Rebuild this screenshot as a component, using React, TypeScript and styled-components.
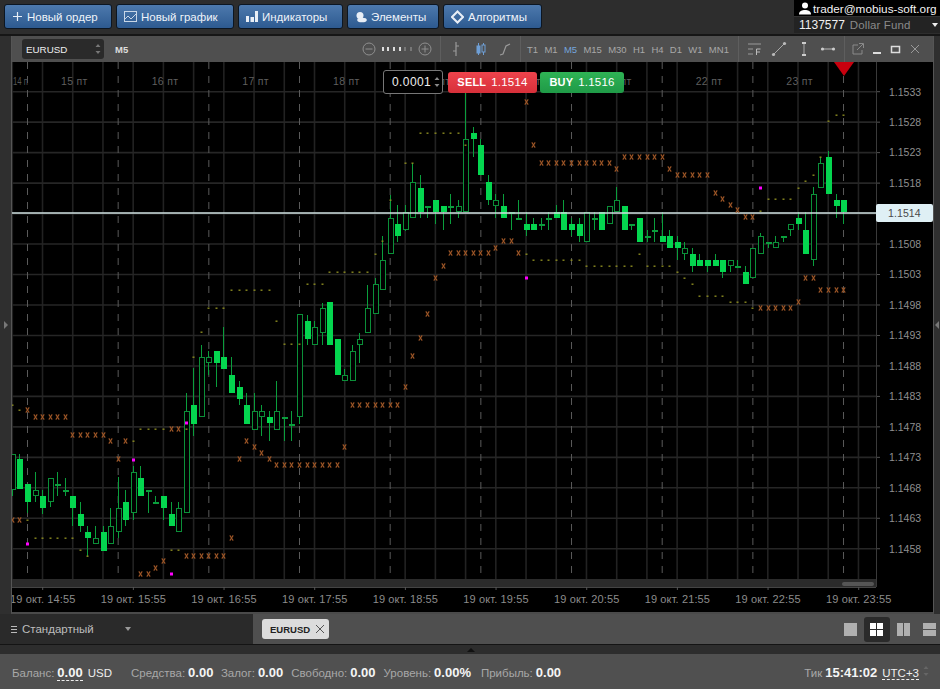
import React from "react";
import styled, { createGlobalStyle } from "styled-components";

const Global = createGlobalStyle`
  html, body { margin: 0; padding: 0; background: #2b2b2b; }
  body { font-family: "Liberation Sans", Arial, sans-serif; }
  * { box-sizing: border-box; }
  svg { flex: none; }
`;

/* ---------- page frame ---------- */
const Page = styled.div`
  width: 940px; height: 689px; overflow: hidden;
  display: flex; flex-direction: column; background: #2b2b2b;
`;
const TopBar = styled.header`
  height: 36px; flex: none; display: flex; align-items: flex-start;
  background: #2d2d2d; border-bottom: 2px solid #161616;
  padding: 4px 0 0 4px;
`;
const Buttons = styled.div`display: flex; gap: 4px; flex: 1;`;
const NavButton = styled.button<{ $w: number }>`
  width: ${p => p.$w}px; height: 25px; padding: 0 0 0 7px; margin: 0;
  display: flex; align-items: center; gap: 4px;
  border: 1px solid #0c1622; border-radius: 3px;
  background: linear-gradient(#4d79ad, #2d5a90);
  color: #eef3f9; font: 11.5px "Liberation Sans", sans-serif;
`;
const Account = styled.div`
  width: 146px; margin-top: -4px; height: 33px; background: #000; display: flex; flex-direction: column;
`;
const AccountTop = styled.div`
  height: 16px; display: flex; align-items: center; gap: 2px; padding-left: 5px;
  color: #f2f2f2; font-size: 11.75px; white-space: nowrap;
`;
const AccountBottom = styled.div`
  height: 17px; display: flex; align-items: center; gap: 5px; padding: 0 0 0 5px;
  background: #232323; border-top: 1px solid #333; color: #f0f0f0; font-size: 12px;
`;
const FundName = styled.span`color: #8a8a8a; font-size: 11.5px; letter-spacing: .1px; flex: 1;`;
const Main = styled.div`flex: 1; display: flex; min-height: 0;`;
const Rail = styled.div<{ $w: number }>`
  width: ${p => p.$w}px; flex: none; background: #2f2f2f; display: flex; align-items: center; justify-content: center;
`;
const RailArrow = styled.i<{ $right?: boolean }>`
  width: 0; height: 0; border-style: solid; border-width: 4px 0 4px 4px;
  border-color: transparent transparent transparent #777;
  transform: ${p => (p.$right ? "rotate(180deg)" : "none")};
`;
const Window = styled.section`
  flex: 1; display: flex; flex-direction: column; border-left: 1px solid #555; border-right: 1px solid #555; border-bottom: 2px solid #4a4a4a;
`;

/* ---------- chart toolbar ---------- */
const Toolbar = styled.div`
  height: 26px; flex: none; display: flex; background: #4f4f4f; color: #a8a8a8; font-size: 9.5px;
`;
const Section = styled.div<{ $w?: number; $pad: number; $gap: number }>`
  ${p => (p.$w ? `width:${p.$w}px; flex:none;` : "flex:1;")}
  display: flex; align-items: center; gap: ${p => p.$gap}px; padding-left: ${p => p.$pad}px;
  border-left: 1px solid #5e5e5e;
`;
const SymbolSection = styled.div`flex: 1; display: flex; align-items: center; padding-left: 10px; gap: 11px;`;
const SymbolBox = styled.div`
  width: 82px; height: 20px; background: #2a2a2a; border-radius: 3px; display: flex; align-items: center; justify-content: space-between;
  padding: 0 3px 0 4px; color: #eee; font-size: 9.8px;
`;
const Period = styled.span`color: #ddd; font-size: 9.5px; font-weight: bold; flex: 1;`;
const Tf = styled.span<{ $active?: boolean }>`
  color: ${p => (p.$active ? "#74a5dc" : "#a8a8a8")};
`;
const ZoomBox = styled.div`display: flex; align-items: center; gap: 6px; margin-right: 8px;`;
const ZoomDots = styled.div`display: flex; gap: 3.7px; align-items: center;`;
const ZoomDot = styled.i<{ $on: boolean }>`
  width: 2px; height: 4px; background: ${p => (p.$on ? "#ddd" : "#777")};
`;

/* ---------- chart ---------- */
const Canvas = styled.div`flex: 1; position: relative; background: #000; min-height: 0;`;
const ChartSvg = styled.svg`display: block; width: 921px; height: 550px;`;
const OrderBar = styled.div`
  position: absolute; left: 371px; top: 8px; display: flex; align-items: center; gap: 5px;
`;
const StepBox = styled.div`
  width: 60px; height: 24px; background: #000; border: 1px solid #777; border-radius: 3px;
  display: flex; align-items: center; justify-content: space-between; padding: 0 2px 0 8px;
  color: #eee; font-size: 12px; letter-spacing: .4px;
`;
const Trade = styled.button<{ $buy?: boolean; $w: number }>`
  width: ${p => p.$w}px; height: 21px; margin: 0 ${p => (p.$buy ? 0 : -2)}px 0 0; padding: 0; border: 0; border-radius: 3px;
  display: flex; align-items: center; justify-content: center; gap: 5px;
  background: ${p => (p.$buy ? "linear-gradient(#2fb355,#1f9a47)" : "linear-gradient(#ee434c,#d7303a)")};
  color: #fff; font: 11.5px "Liberation Sans", sans-serif; letter-spacing: .2px;
  b { font-size: 11px; }
`;
const PriceFlag = styled.div`
  position: absolute; left: 864px; top: 142px; width: 57px; height: 18px; border-radius: 2px;
  background: #dff0f5; color: #4a4a4a; font-size: 10.5px; line-height: 18px; padding-left: 12px; letter-spacing: .1px;
`;

/* ---------- tabs ---------- */
const TabBar = styled.div`height: 30px; flex: none; display: flex; background: #4f4f4f;`;
const LayoutPick = styled.div`
  width: 253px; background: #2a2a2a; display: flex; align-items: center; gap: 5px; padding-left: 11px; color: #bdbdbd; font-size: 11.5px;
`;
const Burger = styled.span`width: 6px; height: 7px; border-top: 1px solid #bbb; border-bottom: 1px solid #bbb; position: relative;
  &::after { content: ""; position: absolute; left: 0; right: 0; top: 2px; height: 1px; background: #bbb; }`;
const PickName = styled.span`width: 98px;`;
const Caret = styled.i`width: 0; height: 0; border-style: solid; border-width: 4px 3.5px 0 3.5px; border-color: #999 transparent transparent transparent;`;
const TabsArea = styled.div`flex: 1; display: flex; align-items: center; padding: 0 0 0 9px;`;
const Tab = styled.div`
  width: 67px; height: 20px; background: #dcdcdc; border-radius: 3px; display: flex; align-items: center; justify-content: space-between;
  padding: 0 3px 0 8px; color: #222; font-size: 9.5px; font-weight: bold;
`;
const Views = styled.div`margin-left: auto; margin-right: -3px; display: flex; align-items: center; height: 100%;`;
const ViewBtn = styled.div<{ $on?: boolean }>`
  width: 26.5px; height: 25px; display: flex; align-items: center; justify-content: center;
  background: ${p => (p.$on ? "#2a2a2a" : "transparent")}; border-radius: 3px;
`;
const Splitter = styled.div`
  height: 10px; flex: none; background: #2d2d2d; border-top: 1px solid #141414; display: flex; padding-left: 467px; align-items: center;
`;
const Up = styled.i`width: 0; height: 0; border-style: solid; border-width: 0 4px 4px 4px; border-color: transparent transparent #111 transparent;`;

/* ---------- status ---------- */
const Status = styled.footer`
  height: 35px; flex: none; background: #505050; display: flex; align-items: center; padding: 1px 0 0 12px; color: #a8a8a8; font-size: 11.5px;
`;
const Stat = styled.span<{ $ml?: number }>`margin-left: ${p => p.$ml ?? 0}px; white-space: nowrap;`;
const Val = styled.b<{ $dash?: boolean }>`
  color: #f5f5f5; font-size: 13px; margin-left: 3px;
  ${p => (p.$dash ? "border-bottom: 1px dashed #eee;" : "")}
`;
const Plain = styled.span<{ $dash?: boolean }>`
  color: #eee; margin-left: 5px; ${p => (p.$dash ? "border-bottom: 1px dashed #eee;" : "")}
`;
const RightStat = styled(Stat)`margin-left: auto;`;

/* ---------- icons ---------- */
const W = "#e8eef6";
const Plus = () => <svg width="11" height="11"><path d="M5.5 1v9M1 5.5h9" stroke={W} strokeWidth="1.2" /></svg>;
const GraphIco = () => (
  <svg width="13" height="13"><rect x=".5" y="1.5" width="12" height="10" fill="none" stroke="#c8d6e6" /><path d="M1 9l3-3 3 3 5-5" fill="none" stroke="#c8d6e6" /></svg>
);
const BarsIco = () => (
  <svg width="12" height="11"><path d="M0 5h3v6H0zM4.5 6H8v5H4.5zM9 0h3v11H9z" fill={W} /></svg>
);
const ElemIco = () => (
  <svg width="12" height="12"><circle cx="5" cy="4.5" r="3.5" fill={W} /><ellipse cx="7" cy="9" rx="4.8" ry="2.3" fill={W} /></svg>
);
const DiamondIco = () => (
  <svg width="13" height="14"><path d="M6.5 1.5L12 7 6.5 12.5 1 7z" fill="none" stroke={W} strokeWidth="2" /></svg>
);
const UserIco = () => (
  <svg width="12" height="13"><circle cx="6" cy="3.5" r="3" fill="#fff" /><path d="M0 12.5c0-3.5 3-4.5 6-4.5s6 1 6 4.5z" fill="#fff" /></svg>
);
const Spin = ({ c = "#888" }: { c?: string }) => (
  <svg width="6" height="12"><path d="M3 1l2.5 3h-5zM3 11L.5 8h5z" fill={c} /></svg>
);
const CircleIco = ({ plus }: { plus?: boolean }) => (
  <svg width="14" height="14"><circle cx="7" cy="7" r="6" fill="none" stroke="#8f8f8f" /><path d={plus ? "M3.5 7h7M7 3.5v7" : "M3.5 7h7"} stroke="#8f8f8f" /></svg>
);
const BarIco = () => (
  <svg width="14" height="16"><path d="M7 1v14M4 10h3M7 5h3" stroke="#9a9a9a" strokeWidth="1.2" fill="none" /></svg>
);
const CandleIco = () => (
  <svg width="14" height="16"><path d="M4.5 2v12M9.5 2v12" stroke="#6f9fd6" /><rect x="3" y="5" width="3" height="7" fill="#6f9fd6" stroke="#6f9fd6" /><rect x="8" y="4" width="3" height="7" fill="#4f4f4f" stroke="#6f9fd6" /></svg>
);
const LineIco = () => (
  <svg width="14" height="16"><path d="M2 14l3-1 3-8 4-2" stroke="#9a9a9a" strokeWidth="1.2" fill="none" /></svg>
);
const FibIco = () => (
  <svg width="16" height="16">
    <path d="M1 3h13M1 8h5M1 13h5" stroke="#9a9a9a" /><path d="M9.5 14V8h4M9.5 11H13" stroke="#bbb" fill="none" />
  </svg>
);
const SlashIco = () => (
  <svg width="16" height="16"><path d="M3 13L13 3" stroke="#a8a8a8" /><circle cx="2.5" cy="13.5" r="1.6" fill="#bbb" /><circle cx="13.5" cy="2.5" r="1.6" fill="#bbb" /></svg>
);
const VertIco = () => (
  <svg width="16" height="16"><path d="M8 2v12" stroke="#a8a8a8" /><path d="M6 2h4M6 14h4" stroke="#ccc" strokeWidth="2" /></svg>
);
const HorIco = () => (
  <svg width="16" height="16"><path d="M2 8h12" stroke="#a8a8a8" strokeWidth="1.2" /><circle cx="2.5" cy="8" r="1.6" fill="#ccc" /><circle cx="13.5" cy="8" r="1.6" fill="#ccc" /></svg>
);
const PopIco = () => (
  <svg width="12" height="14"><path d="M6 3H1v9h9V8" fill="none" stroke="#8a8a8a" /><path d="M5 8l6-6M7 1.5h4.5V6" fill="none" stroke="#8a8a8a" /></svg>
);
const MinIco = () => <svg width="12" height="14"><path d="M2 11h8" stroke="#ddd" strokeWidth="2" /></svg>;
const MaxIco = () => <svg width="12" height="14"><rect x="1.5" y="4.5" width="8" height="6" fill="none" stroke="#ddd" strokeWidth="1.5" /></svg>;
const CloseIco = ({ c = "#999", s = 12 }: { c?: string; s?: number }) => (
  <svg width={s} height={s + 2}><path d={`M2 3L${s - 2} ${s - 1}M${s - 2} 3L2 ${s - 1}`} stroke={c} /></svg>
);
const ViewIco = ({ kind, on }: { kind: number; on?: boolean }) => {
  const c = on ? "#fff" : "#b0b0b0";
  const r: number[][] =
    kind === 0 ? [[0, 0, 13, 13]] :
    kind === 1 ? [[0, 0, 6, 6], [7, 0, 6, 6], [0, 7, 6, 6], [7, 7, 6, 6]] :
    kind === 2 ? [[0, 0, 6, 13], [7, 0, 6, 13]] :
    [[0, 0, 13, 6], [0, 7, 13, 6]];
  return <svg width="13" height="13">{r.map((a, i) => <rect key={i} x={a[0]} y={a[1]} width={a[2]} height={a[3]} fill={c} />)}</svg>;
};

/* ---------- chart data: [top, bottom, high, low, kind]  kind 0 filled, 1 hollow, 2 doji ---------- */
const C: number[][] = [
  [454,490,454,496,1],[459,489,454,489,0],[484,502,484,513,0],[490,496,472,502,1],[496,508,490,514,0],
  [478,502,478,507,1],[484,485,472,496,2],[490,491,478,496,2],[496,508,496,526,0],[514,526,502,532,0],
  [532,538,526,557,0],[538,544,526,544,1],[532,551,526,551,0],[526,544,508,544,1],[508,532,477,538,1],
  [502,520,490,526,0],[472,513,466,520,1],[478,496,466,496,0],[490,491,490,513,2],[502,503,496,503,2],
  [496,508,496,520,0],[514,526,502,526,0],[508,532,502,532,1],[411,513,393,513,1],[405,424,368,436,0],
  [357,417,345,417,1],[357,363,351,375,1],[351,363,351,387,0],[357,369,327,369,0],[375,393,357,393,0],
  [387,399,381,405,0],[405,424,393,424,0],[411,430,393,430,1],[411,417,405,436,1],[417,423,411,441,0],
  [411,430,381,430,1],[417,418,417,441,2],[424,425,411,441,2],[314,417,314,424,1],[321,339,315,345,0],
  [327,345,321,345,1],[308,333,303,345,1],[302,345,302,345,0],[339,375,339,375,0],[375,381,369,381,1],
  [351,381,345,381,1],[339,345,333,363,1],[308,333,285,333,1],[284,314,278,314,1],[260,290,236,290,1],
  [218,254,195,254,1],[224,236,205,242,0],[212,230,205,231,1],[182,218,163,218,1],[188,212,175,218,0],
  [206,207,206,218,2],[200,212,200,224,0],[206,212,206,230,0],[206,207,194,224,2],[206,212,200,218,1],
  [139,212,92,212,1],[133,139,127,157,0],[145,175,139,175,0],[182,200,175,205,0],[200,206,194,218,1],
  [206,218,194,218,0],[212,213,212,230,2],[218,219,200,219,2],[224,230,212,236,0],[224,230,218,230,0],
  [224,225,218,230,2],[218,219,212,230,2],[212,218,205,218,0],[212,230,200,230,0],[224,230,218,236,0],
  [224,236,218,242,0],[212,242,212,242,1],[218,219,212,230,2],[212,230,212,230,0],[206,224,206,224,1],
  [200,212,187,212,1],[206,230,206,230,0],[224,225,224,230,2],[218,242,218,242,0],[236,237,230,242,2],
  [230,231,218,242,2],[236,242,212,242,0],[236,248,230,248,0],[242,248,236,260,0],[248,254,242,260,1],
  [254,266,248,272,0],[260,266,254,266,0],[260,266,260,272,0],[260,266,254,266,0],[260,272,260,278,0],
  [260,266,260,272,1],[266,267,260,267,2],[272,284,266,284,0],[248,278,248,278,1],[236,254,233,254,1],
  [242,243,242,248,2],[242,248,236,248,1],[236,237,236,242,2],[224,230,224,236,1],[218,224,212,230,0],
  [230,254,212,254,0],[194,260,187,266,1],[163,188,157,188,1],[157,194,151,194,0],[200,206,194,218,0],
  [200,212,200,224,0],
];
/* runs: [fromIndex, toIndex, y] */
const MARKS: number[][] = [
  [0,1,520],[2,2,410],[3,7,417],[8,12,435],[13,13,441],[14,14,459],[15,15,441],[17,18,574],[19,19,568],[20,20,561],
  [21,22,429],[23,28,556],[29,29,538],[30,30,459],[31,31,441],[32,32,447],[33,33,453],[34,34,459],[35,43,465],[44,44,447],
  [45,51,405],[52,52,387],[53,53,356],[54,54,338],[55,55,314],[56,56,278],[57,57,266],[58,63,253],[64,64,248],[65,66,241],
  [67,67,253],[68,68,102],[69,69,145],[70,79,163],[80,80,169],[81,86,157],[87,87,169],[88,92,175],[93,93,193],[94,94,199],
  [95,95,205],[96,96,210],[97,98,217],[99,103,308],[104,104,302],[105,106,278],[107,110,290],
];
const DOTS: number[][] = [
  [0,0,405],[1,1,410],[2,2,520],[3,8,538],[9,9,550],[10,10,556],[16,16,441],[17,20,429],[21,22,550],[23,23,429],
  [24,24,357],[25,25,332],[26,28,308],[29,34,290],[35,35,321],[36,38,344],[39,41,284],[42,47,272],[48,48,254],[49,49,241],
  [50,50,200],[52,53,163],[54,59,133],[60,60,145],[68,68,254],[69,75,260],[76,82,266],[83,83,254],[84,87,266],[88,88,272],
  [89,89,278],[90,90,284],[91,94,296],[95,97,302],[98,98,308],[99,99,211],[100,103,199],[104,104,188],[105,105,181],[106,106,175],
  [107,107,157],[108,108,121],[109,110,115],
];
const MAGENTA: number[][] = [[2,544],[16,460],[23,423],[21,574],[68,278],[99,188]];
const cx = (i: number) => Math.floor(12.4 + 7.556 * i) + 0.5;
const expand = (runs: number[][]) => runs.flatMap(([a, b, y]) => Array.from({ length: b - a + 1 }, (_, k) => [a + k, y]));

const PRICES = ["1.1533","1.1528","1.1523","1.1518","","1.1508","1.1503","1.1498","1.1493","1.1488","1.1483","1.1478","1.1473","1.1468","1.1463","1.1458"];
const TIMES = ["14:55","15:55","16:55","17:55","18:55","19:55","20:55","21:55","22:55","23:55"];
const AX = { fill: "#8f8f8f", fontFamily: "Liberation Sans, sans-serif", fontSize: 10.5, letterSpacing: 0 };

const GREEN = "#04d64f", WICK = "#0a9e3c", HOLLOW = "#0b8f38";

const Chart = () => (
  <ChartSvg viewBox="12 62 921 550">
    <rect x="12" y="62" width="921" height="550" fill="#000" />
    {Array.from({ length: 29 }, (_, k) => 12.3 + 30.22 * k).map(x => (
      <line key={x} x1={x} x2={x} y1="62" y2="579" stroke="#222" strokeWidth="1.6" />
    ))}
    {Array.from({ length: 16 }, (_, k) => 91.7 + 30.47 * k).map(y => (
      <line key={y} x1="12" x2="876" y1={y} y2={y} stroke="#262626" strokeWidth="1.6" />
    ))}
    {Array.from({ length: 10 }, (_, k) => 27.5 + 90.67 * k).map(x => (
      <line key={x} x1={x} x2={x} y1="62" y2="579" stroke="#5a5a5a" strokeDasharray="7 7" />
    ))}
    <g shapeRendering="crispEdges">
      {C.map(([t, b, h, l, k], i) => {
        const x = cx(i);
        return (
          <g key={i}>
            <line x1={x} x2={x} y1={h} y2={l} stroke={WICK} />
            {k === 1 ? (
              <rect x={x - 2.5} y={t + 0.5} width="5" height={b - t - 1} fill="#000" stroke={HOLLOW} />
            ) : k === 2 ? (
              <rect x={x - 2.5} y={t} width="6" height="2" fill={WICK} />
            ) : (
              <rect x={x - 2.5} y={t} width="6" height={b - t} fill={GREEN} />
            )}
          </g>
        );
      })}
    </g>
    <line x1="12" x2="876" y1="213" y2="213" stroke="#cfe0e0" strokeWidth="1.5" />
    {expand(DOTS).map(([i, y], n) => <rect key={n} x={cx(i) - 1} y={y - 0.5} width="2" height="1.4" fill="#8a8a20" />)}
    {expand(MARKS).map(([i, y], n) => (
      <path key={n} d={`M${cx(i) - 1.7} ${y - 2.6}l3.4 5.2M${cx(i) + 1.7} ${y - 2.6}l-3.4 5.2`} stroke="#9c5526" strokeWidth="1.1" fill="none" />
    ))}
    {MAGENTA.map(([i, y]) => <rect key={i} x={cx(i) - 1.5} y={y - 1.5} width="3" height="3" fill="#f0f" />)}

    {/* upper day labels */}
    <text x="13" y="85" fill="#555" fontSize="10" fontFamily="Liberation Sans, sans-serif" textLength="15" lengthAdjust="spacingAndGlyphs">14 п</text>
    {[15, 16, 17, 18, 19, 20, 21, 22, 23].map((d, k) => (
      <text key={d} x={61 + 90.67 * k} y="85" fill="#5f5f5f" fontSize="10.5" letterSpacing=".3" fontFamily="Liberation Sans, sans-serif">{d} пт</text>
    ))}
    <path d="M834 62h20l-10 14z" fill="#c8000e" />

    {/* price axis */}
    <line x1="876.5" x2="876.5" y1="62" y2="587" stroke="#3a3a3a" />
    {PRICES.map((p, k) => {
      const y = 91.7 + 30.47 * k;
      return (
        <g key={k}>
          <line x1="877" x2="880" y1={y} y2={y} stroke="#555" />
          {p && <text x="889" y={y + 3.8} {...AX}>{p}</text>}
        </g>
      );
    })}

    {/* scroller and time axis */}
    <rect x="12" y="579" width="864" height="8" fill="#2b2b2b" />
    <line x1="12" x2="876" y1="587.5" y2="587.5" stroke="#454545" />
    <rect x="842" y="582" width="32" height="4" rx="2" fill="#555" />
    {TIMES.map((t, k) => {
      const x = 42.7 + 90.67 * k;
      return (
        <g key={t}>
          <line x1={x} x2={x} y1="587" y2="590" stroke="#555" />
          <text x={x} y="603" textAnchor="middle" fill="#8c8c8c" fontSize="11" letterSpacing=".12" fontFamily="Liberation Sans, sans-serif">19 окт. {t}</text>
        </g>
      );
    })}
  </ChartSvg>
);

const TFS = ["T1", "M1", "M5", "M15", "M30", "H1", "H4", "D1", "W1", "MN1"];

export default function App() {
  return (
    <Page>
      <Global />
      <TopBar>
        <Buttons>
          <NavButton $w={108}><Plus />Новый ордер</NavButton>
          <NavButton $w={118}><GraphIco />Новый график</NavButton>
          <NavButton $w={105}><BarsIco />Индикаторы</NavButton>
          <NavButton $w={92}><ElemIco />Элементы</NavButton>
          <NavButton $w={99}><DiamondIco />Алгоритмы</NavButton>
        </Buttons>
        <Account>
          <AccountTop><UserIco />trader@mobius-soft.org</AccountTop>
          <AccountBottom>1137577 <FundName>Dollar Fund</FundName><Caret style={{ borderTopColor: "#eee", marginRight: 2 }} /></AccountBottom>
        </Account>
      </TopBar>
      <Main>
        <Rail $w={11}><RailArrow /></Rail>
        <Window>
          <Toolbar>
            <SymbolSection>
              <SymbolBox>EURUSD<Spin c="#777" /></SymbolBox>
              <Period>M5</Period>
              <ZoomBox>
                <CircleIco />
                <ZoomDots>{[1, 1, 1, 1, 0, 0].map((o, i) => <ZoomDot key={i} $on={!!o} />)}</ZoomDots>
                <CircleIco plus />
              </ZoomBox>
            </SymbolSection>
            <Section $w={80} $pad={8} $gap={10.5}><BarIco /><CandleIco /><LineIco /></Section>
            <Section $w={218} $pad={6} $gap={6.3}>{TFS.map(t => <Tf key={t} $active={t === "M5"}>{t}</Tf>)}</Section>
            <Section $w={106} $pad={8} $gap={8.3}><FibIco /><SlashIco /><VertIco /><HorIco /></Section>
            <Section $w={89} $pad={7} $gap={7}><PopIco /><MinIco /><MaxIco /><CloseIco /></Section>
          </Toolbar>
          <Canvas>
            <Chart />
            <OrderBar>
              <StepBox>0.0001<Spin /></StepBox>
              <Trade $w={89}><b>SELL</b> 1.1514</Trade>
              <Trade $buy $w={84}><b>BUY</b> 1.1516</Trade>
            </OrderBar>
            <PriceFlag>1.1514</PriceFlag>
          </Canvas>
        </Window>
        <Rail $w={6}><RailArrow $right /></Rail>
      </Main>
      <TabBar>
        <LayoutPick><Burger /><PickName>Стандартный</PickName><Caret /></LayoutPick>
        <TabsArea>
          <Tab>EURUSD<CloseIco c="#555" s={12} /></Tab>
          <Views>
            <ViewBtn><ViewIco kind={0} /></ViewBtn>
            <ViewBtn $on><ViewIco kind={1} on /></ViewBtn>
            <ViewBtn><ViewIco kind={2} /></ViewBtn>
            <ViewBtn><ViewIco kind={3} /></ViewBtn>
          </Views>
        </TabsArea>
      </TabBar>
      <Splitter><Up /></Splitter>
      <Status>
        <Stat>Баланс:<Val $dash>0.00</Val><Plain>USD</Plain></Stat>
        <Stat $ml={19}>Средства:<Val>0.00</Val></Stat>
        <Stat $ml={7.5}>Залог:<Val>0.00</Val></Stat>
        <Stat $ml={8}>Свободно:<Val>0.00</Val></Stat>
        <Stat $ml={8}>Уровень:<Val>0.00%</Val></Stat>
        <Stat $ml={10}>Прибыль:<Val>0.00</Val></Stat>
        <RightStat>Тик<Val>15:41:02</Val><Plain $dash>UTC+3</Plain></RightStat>
        <Stat $ml={4}><Spin c="#666" /></Stat>
        <Stat $ml={11} />
      </Status>
    </Page>
  );
}
